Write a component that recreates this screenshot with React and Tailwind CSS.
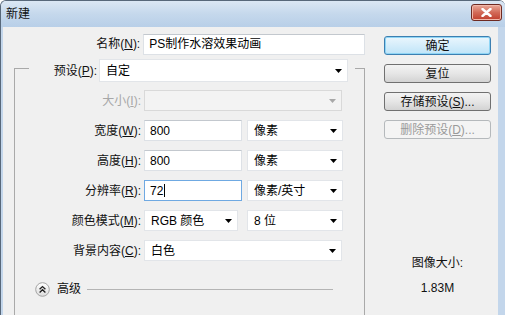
import React from "react";

const FONT = "font-['Liberation_Sans','Noto_Sans_CJK_SC',sans-serif]";

function Label({ className = "", disabled, children }) {
  return (
    <div
      className={`text-right leading-[16px] whitespace-nowrap ${
        disabled ? "text-[#a7a7a7]" : "text-[#111]"
      } ${className}`}
    >
      {children}
    </div>
  );
}

function TextBox({ className = "", focused, children }) {
  return (
    <div
      className={`h-[21px] flex items-center pl-[5px] bg-white border leading-[16px] ${
        focused ? "border-[#6fa9e2]" : "border-[#dde1e6] border-t-[#c3c8ce]"
      } ${className}`}
    >
      {children}
    </div>
  );
}

function Arrow({ disabled }) {
  return (
    <svg width="7" height="4" viewBox="0 0 7 4" className="shrink-0">
      <path d="M0 0h7L3.5 4z" fill={disabled ? "#a8a8a8" : "#000"} />
    </svg>
  );
}

function Select({ className = "", value, disabled }) {
  return (
    <div
      className={`h-[21px] flex items-center justify-between pl-[6px] pr-[5px] border leading-[16px] ${
        disabled
          ? "bg-[#f3f3f3] border-[#d9d9d9]"
          : "bg-white border-[#e2e5e9]"
      } ${className}`}
    >
      <span>{value}</span>
      <Arrow disabled={disabled} />
    </div>
  );
}

function Btn({ kind = "normal", children }) {
  const styles = {
    default:
      "border-[#3c7fb1] bg-linear-to-b from-[#eaf6fd] to-[#bfe4f8] shadow-[inset_0_0_0_1px_#8fd5f5] text-[#111]",
    normal:
      "border-[#707070] bg-linear-to-b from-[#f3f3f3] via-[#e6e6e6] to-[#d3d3d3] text-[#111]",
    disabled: "border-[#b5b9bc] bg-[#f4f4f4] text-[#9a9a9a]",
  };
  return (
    <div
      className={`w-[107px] h-[19px] flex items-center justify-center rounded-[3px] border leading-[16px] ${styles[kind]}`}
    >
      {children}
    </div>
  );
}

function FormRow({ label, disabled, children }) {
  return (
    <div className="flex items-center h-[21px]">
      <Label className="w-[126px]" disabled={disabled}>
        {label}
      </Label>
      <div className="ml-[3px] flex items-center">{children}</div>
    </div>
  );
}

export default function App() {
  return (
    <div
      className={`w-[505px] h-[315px] overflow-hidden flex flex-col border-l border-t border-[#58687a] rounded-tl-[6px] rounded-tr-[6px] bg-[#c3d6eb] text-[12px] ${FONT}`}
    >
      {/* Title bar */}
      <div className="h-[26px] flex items-center justify-between pl-[5px] pr-[3px] bg-linear-to-b from-[#dbe7f4] via-[#c5d8ec] to-[#b8cfe8]">
        <span className="text-[#111] text-[12px] leading-[16px]">新建</span>
        <div className="w-[31px] h-[17px] mb-[3px] rounded-[3px] border border-[#6e2a22] bg-linear-to-b from-[#e9a99a] via-[#d26a58] to-[#c03d2c] flex items-center justify-center shadow-[inset_0_0_0_1px_#f2b8aa]">
          <svg width="11" height="9" viewBox="0 0 11 9">
            <path
              d="M1.5 1 L9.5 8 M9.5 1 L1.5 8"
              stroke="#fff"
              strokeWidth="2.4"
              strokeLinecap="round"
            />
          </svg>
        </div>
      </div>

      {/* Client area */}
      <div className="flex flex-1 min-h-0 border-l-2 border-r-[7px] border-[#c3d6eb] bg-[#f0f0f0]">
        {/* Left column */}
        <div className="w-[362px] flex flex-col pt-[7px]">
          <div className="flex items-center h-[20px]">
            <Label className="w-[138px]">
              名称(<u>N</u>):
            </Label>
            <TextBox className="ml-[3px] w-[223px]">PS制作水溶效果动画</TextBox>
          </div>

          <fieldset className="ml-[11px] w-[351px] flex-1 border-l border-t border-r border-[#a9a9a9]">
            <legend className="ml-[14px] pt-[5px] pr-[7px] flex items-center">
              <Label className="w-[68px]">
                预设(<u>P</u>):
              </Label>
              <Select
                className="ml-[2px] w-[249px] h-[23px]"
                value="自定"
              />
            </legend>

            <div className="flex flex-col gap-[9px] pt-[8px]">
              <FormRow
                disabled
                label={
                  <>
                    大小(<u>I</u>):
                  </>
                }
              >
                <Select className="w-[198px]" value="" disabled />
              </FormRow>
              <FormRow
                label={
                  <>
                    宽度(<u>W</u>):
                  </>
                }
              >
                <TextBox className="w-[98px]">800</TextBox>
                <Select className="ml-[5px] w-[96px]" value="像素" />
              </FormRow>
              <FormRow
                label={
                  <>
                    高度(<u>H</u>):
                  </>
                }
              >
                <TextBox className="w-[98px]">800</TextBox>
                <Select className="ml-[5px] w-[96px]" value="像素" />
              </FormRow>
              <FormRow
                label={
                  <>
                    分辨率(<u>R</u>):
                  </>
                }
              >
                <TextBox className="w-[98px]" focused>
                  72
                  <span className="w-px h-[13px] bg-black ml-px" />
                </TextBox>
                <Select className="ml-[5px] w-[96px]" value="像素/英寸" />
              </FormRow>
              <FormRow
                label={
                  <>
                    颜色模式(<u>M</u>):
                  </>
                }
              >
                <Select className="w-[94px]" value="RGB 颜色" />
                <Select className="ml-[9px] w-[96px]" value="8 位" />
              </FormRow>
              <FormRow
                label={
                  <>
                    背景内容(<u>C</u>):
                  </>
                }
              >
                <Select className="w-[198px]" value="白色" />
              </FormRow>
            </div>

            <div className="flex items-center h-[16px] mt-[20px]">
              <svg width="15" height="15" viewBox="0 0 15 15" className="ml-[20px]">
                <defs>
                  <linearGradient id="adv" x1="0" y1="0" x2="0" y2="1">
                    <stop offset="0" stopColor="#ffffff" />
                    <stop offset="1" stopColor="#dcdcdc" />
                  </linearGradient>
                </defs>
                <circle cx="7.5" cy="7.5" r="6.8" fill="url(#adv)" stroke="#a3a3a3" />
                <path
                  d="M4.6 7.2 L7.5 4.6 L10.4 7.2 M4.6 10.4 L7.5 7.8 L10.4 10.4"
                  fill="none"
                  stroke="#222"
                  strokeWidth="1.4"
                />
              </svg>
              <span className="ml-[7px] leading-[16px] text-[#111]">高级</span>
              <div className="flex-1 ml-[6px] mr-[31px] h-px bg-[#b4b4b4]" />
            </div>
          </fieldset>
        </div>

        {/* Right column */}
        <div className="flex-1 flex flex-col pl-[19px] pt-[9px]">
          <div className="flex flex-col gap-[9px]">
            <Btn kind="default">确定</Btn>
            <Btn>复位</Btn>
            <Btn>
              存储预设(<u>S</u>)...
            </Btn>
            <Btn kind="disabled">
              删除预设(<u>D</u>)...
            </Btn>
          </div>
          <div className="w-[107px] mt-[116px] flex flex-col items-center gap-[9px] leading-[16px] text-[#111]">
            <span>图像大小:</span>
            <span>1.83M</span>
          </div>
        </div>
      </div>
    </div>
  );
}
